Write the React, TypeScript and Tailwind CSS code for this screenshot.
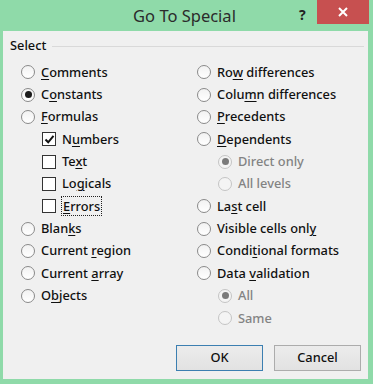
import type { ReactNode } from "react";

type Opt = {
  label: string;
  key?: number;
  kind: "radio" | "check";
  checked?: boolean;
  disabled?: boolean;
  indent?: boolean;
  focus?: boolean;
};

const left: Opt[] = [
  { label: "Comments", key: 0, kind: "radio" },
  { label: "Constants", key: 1, kind: "radio", checked: true },
  { label: "Formulas", key: 0, kind: "radio" },
  { label: "Numbers", key: 1, kind: "check", checked: true, indent: true },
  { label: "Text", key: 2, kind: "check", indent: true },
  { label: "Logicals", key: 2, kind: "check", indent: true },
  { label: "Errors", key: 0, kind: "check", indent: true, focus: true },
  { label: "Blanks", key: 4, kind: "radio" },
  { label: "Current region", key: 8, kind: "radio" },
  { label: "Current array", key: 8, kind: "radio" },
  { label: "Objects", key: 1, kind: "radio" },
];

const right: Opt[] = [
  { label: "Row differences", key: 2, kind: "radio" },
  { label: "Column differences", key: 4, kind: "radio" },
  { label: "Precedents", key: 0, kind: "radio" },
  { label: "Dependents", key: 0, kind: "radio" },
  { label: "Direct only", kind: "radio", checked: true, disabled: true, indent: true },
  { label: "All levels", kind: "radio", disabled: true, indent: true },
  { label: "Last cell", key: 2, kind: "radio" },
  { label: "Visible cells only", key: 17, kind: "radio" },
  { label: "Conditional formats", key: 5, kind: "radio" },
  { label: "Data validation", key: 5, kind: "radio" },
  { label: "All", kind: "radio", checked: true, disabled: true, indent: true },
  { label: "Same", kind: "radio", disabled: true, indent: true },
];

function Keyed({ text, at }: { text: string; at?: number }) {
  if (at === undefined) return <>{text}</>;
  return (
    <>
      {text.slice(0, at)}
      <u className="underline-offset-[2px]">{text[at]}</u>
      {text.slice(at + 1)}
    </>
  );
}

function Radio({ checked, disabled }: { checked?: boolean; disabled?: boolean }) {
  return (
    <span
      className={
        "flex h-[14px] w-[14px] shrink-0 items-center justify-center rounded-full border " +
        (disabled
          ? "border-[#c4c4c4] bg-[#f4f4f4]"
          : "border-[#8a8a8a] bg-gradient-to-b from-[#f2f2f2] to-white")
      }
    >
      {checked && (
        <span
          className={
            "h-[7px] w-[7px] rounded-full " +
            (disabled ? "bg-[#7a7a7a]" : "bg-[#1b1b1b]")
          }
        />
      )}
    </span>
  );
}

function Check({ checked }: { checked?: boolean }) {
  return (
    <span className="flex h-[14px] w-[14px] shrink-0 items-center justify-center border border-[#333] bg-white">
      {checked && (
        <svg width="11" height="11" viewBox="0 0 11 11">
          <path d="M1.5 5.5 L4.2 8.3 L9.5 1.8" fill="none" stroke="#111" strokeWidth="2" />
        </svg>
      )}
    </span>
  );
}

function Row({ o }: { o: Opt }) {
  let label: ReactNode = <Keyed text={o.label} at={o.key} />;
  if (o.focus) {
    label = (
      <span className="-mx-[1px] border border-dotted border-[#222] px-[1px] leading-[14px]">
        {label}
      </span>
    );
  }
  return (
    <div className={"flex h-[22.36px] items-center gap-[6px] " + (o.indent ? "pl-[21px]" : "")}>
      {o.kind === "radio" ? <Radio checked={o.checked} disabled={o.disabled} /> : <Check checked={o.checked} />}
      <span className={o.disabled ? "text-[#838383]" : "text-[#101010]"}>{label}</span>
    </div>
  );
}

export default function App() {
  return (
    <div
      className="flex h-[384px] w-[373px] flex-col bg-[#8fdaa9] pb-[5px] pl-[3px] pr-[5px] text-[12.8px] font-medium"
      style={{ fontFamily: '"Noto Sans", "Open Sans", sans-serif' }}
    >
      <div className="relative flex h-[31px] shrink-0 items-center justify-center">
        <span className="-ml-[2px] mt-[1px] text-[16.5px] font-normal text-[#2b2b2b]">Go To Special</span>
        <span className="absolute left-[296px] top-[4px] text-[14px] font-bold text-[#222]">?</span>
        <div className="absolute right-[-1px] top-0 flex h-[24px] w-[52px] items-center justify-center bg-[#c75050]">
          <svg width="10" height="10" viewBox="0 0 10 10">
            <path d="M1 1 L9 9 M9 1 L1 9" stroke="#fff" strokeWidth="2" />
          </svg>
        </div>
      </div>
      <div className="flex flex-1 flex-col bg-[#f0f0f0]">
        <div className="flex h-[30px] items-center gap-[6px] pl-[7px] pr-[4px]">
          <span className="text-[#101010]">Select</span>
          <span className="h-px flex-1 bg-[#d9d9d9]" />
        </div>
        <div className="grid grid-cols-[176px_1fr] pl-[18px]">
          <div className="flex flex-col">
            {left.map((o) => (
              <Row key={o.label} o={o} />
            ))}
          </div>
          <div className="flex flex-col">
            {right.map((o) => (
              <Row key={o.label} o={o} />
            ))}
          </div>
        </div>
        <div className="mt-auto mb-[8px] flex justify-end gap-[11px] pr-[7px]">
          <button className="h-[26px] w-[87px] border border-[#3c7fb1] bg-gradient-to-b from-[#ececec] to-[#e2e2e2] text-[#101010]">
            OK
          </button>
          <button className="h-[26px] w-[87px] border border-[#acacac] bg-gradient-to-b from-[#ececec] to-[#e2e2e2] text-[#101010]">
            Cancel
          </button>
        </div>
      </div>
    </div>
  );
}
